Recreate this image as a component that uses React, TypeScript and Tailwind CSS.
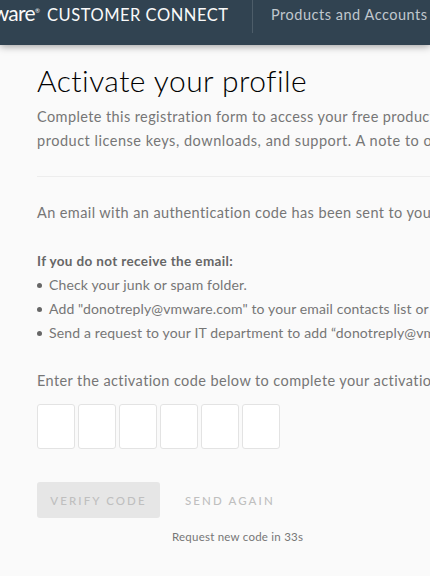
const tips = [
  { text: 'Check your junk or spam folder.', spacing: 'tracking-[0.14px]' },
  { text: 'Add "donotreply@vmware.com" to your email contacts list or safe senders.', spacing: 'tracking-[0.13px]' },
  { text: 'Send a request to your IT department to add “donotreply@vmware.com”.', spacing: 'tracking-[0.15px]' },
];

function Header() {
  return (
    <header className="relative flex h-[45px] bg-[#314351] text-[#fafafa] shadow-[0_1px_8px_rgba(0,0,0,0.4)]">
      <div className="flex h-[33px] w-[253px] shrink-0 border-r border-[#4d5d69]">
        <div className="flex w-[35px] shrink-0 justify-end text-[21px] leading-[26px] font-normal tracking-[-0.7px]">
          <span>vmware</span>
        </div>
        <span className="w-[12px] shrink-0 pt-[8px] text-[6px] leading-[6px]">®</span>
        <span className="text-[16.5px] leading-[30px] tracking-[0.52px]">CUSTOMER CONNECT</span>
      </div>
      <span className="pl-[18px] text-[14.5px] leading-[30px] tracking-[0.52px] text-[#c0c8ce]">Products and Accounts</span>
    </header>
  );
}

export default function App() {
  return (
    <div className="h-[576px] w-[430px] overflow-hidden bg-[#fafafa] font-['Lato','Liberation_Sans',sans-serif] whitespace-nowrap text-[#767676]">
      <Header />
      <main className="w-[800px] pl-[37px]">
        <h1 className="pt-[17px] text-[30px] leading-[36px] font-light tracking-[0.45px] text-black">Activate your profile</h1>
        <p className="mt-[7px] text-[14.5px] leading-[24px] tracking-[0.4px]">
          Complete this registration form to access your free product trials,
          <br />
          <span className="tracking-[0.52px]">product license keys, downloads, and support. A note to our customers</span>
        </p>
        <hr className="mt-[23px] border-[#ededed]" />
        <p className="mt-[24px] text-[14.5px] leading-[24px] tracking-[0.4px]">
          An email with an authentication code has been sent to your address.
        </p>
        <h2 className="mt-[24px] text-[13.5px] leading-[24px] font-bold tracking-[0.37px] text-[#666]">If you do not receive the email:</h2>
        <ul className="text-[14px] leading-[24px]">
          {tips.map((tip) => (
            <li key={tip.text} className="flex items-center">
              <span className="mr-[7px] size-[5px] rounded-full bg-[#666]" />
              <span className={tip.spacing}>{tip.text}</span>
            </li>
          ))}
        </ul>
        <p className="mt-[24px] text-[14.5px] leading-[24px] tracking-[0.41px]">
          Enter the activation code below to complete your activation.
        </p>
        <div className="mt-[11px] flex gap-[3px]">
          {[0, 1, 2, 3, 4, 5].map((digit) => (
            <input
              key={digit}
              maxLength={1}
              aria-label={`Digit ${digit + 1}`}
              className="h-[45px] w-[38px] rounded-[3px] border border-[#e3e3e3] bg-white text-center"
            />
          ))}
        </div>
        <div className="mt-[33px] flex">
          <button className="h-[36px] w-[123px] rounded-[3px] bg-[#e6e6e6] pt-[2px] text-[11.5px] font-medium tracking-[2.1px] text-[#bfbfbf]" disabled>
            VERIFY CODE
          </button>
          <button className="ml-[25px] h-[36px] pt-[2px] text-[11.5px] font-medium tracking-[2.1px] text-[#bfbfbf]" disabled>
            SEND AGAIN
          </button>
        </div>
        <p className="mt-[11px] pl-[135px] text-[11.5px] leading-[16px] tracking-[0.23px]">Request new code in 33s</p>
      </main>
    </div>
  );
}
